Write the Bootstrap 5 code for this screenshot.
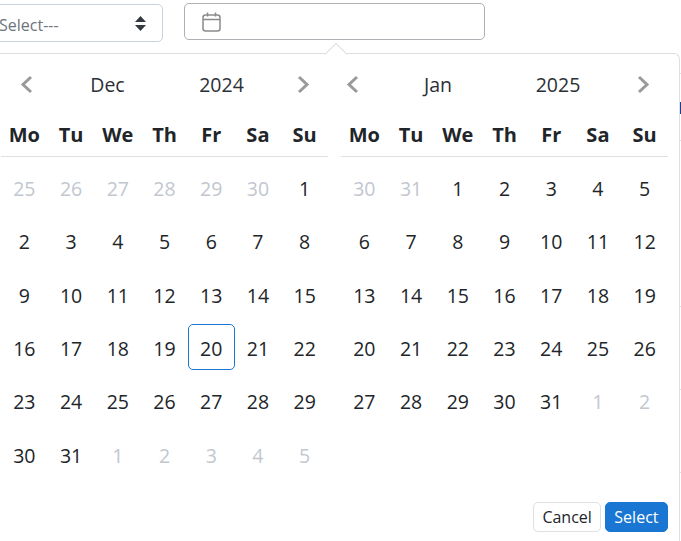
<!DOCTYPE html>
<html lang="en">
<head>
<meta charset="utf-8">
<title>Date range picker</title>
<link href="https://cdn.jsdelivr.net/npm/bootstrap@5.3.0/dist/css/bootstrap.min.css" rel="stylesheet">
<style>
html,body{height:541px;overflow:hidden;background:#fff}
body{font-family:"Open Sans","Noto Sans","Liberation Sans",sans-serif;color:#212529;position:relative}
.toprow{gap:21px;margin-left:-13px;padding-top:3px;align-items:flex-start}
.kind-select{width:176px;height:38px;margin-top:1px;font-size:16px;color:#6c757d;padding:4px 30px 0 11px;border-color:#c9d3da;border-radius:5px;
 background-image:url("data:image/svg+xml,%3Csvg xmlns='http://www.w3.org/2000/svg' viewBox='0 0 11 15'%3E%3Cpath fill='%23343a40' d='M5.5 0 11 6H0zM5.5 15 0 9h11z'/%3E%3C/svg%3E");
 background-size:11px 15px;background-position:right 16px center}
.date-box{width:301px;height:37px;border:1px solid #aeaeb4;border-radius:5px;padding-left:17px}
.date-box svg{width:19px;height:20px;display:block}
.picker{position:absolute;left:-12px;top:53px;width:692px;height:488px;background:#fff;border:1px solid #dcdfe2;border-bottom:0;border-radius:6px 6px 0 0;padding:0 10px 0 12px;z-index:2}
.picker::before{content:"";position:absolute;left:339px;top:-8px;width:16px;height:16px;background:#fff;border-left:1px solid #dcdfe2;border-top:1px solid #dcdfe2;transform:rotate(45deg)}
.cals{gap:13px;position:relative}
.cal{width:327px}
.navline{height:60px;padding-top:1px;font-size:19.500px;color:#2b3036}
.navline svg{width:13px;height:19px;display:block;flex:none}
.cal-a .navline{padding-left:19px;padding-right:18px}
.cal-b .navline{padding-left:5px;padding-right:18px}
.cal-a .m{width:149px}.cal-a .y{width:79px}
.cal-b .m{width:158px}.cal-b .y{width:82px}
.dow,.days{display:grid;grid-template-columns:repeat(7,1fr);text-align:center}
.dow{height:43px;font-weight:700;font-size:20px;line-height:41px;border-bottom:1px solid #dee0e3;color:#212529}
.days{margin-top:7px;grid-auto-rows:46px;row-gap:7.33px;font-size:19.500px}
.days span{border:1px solid transparent;border-radius:5px;line-height:48px;height:46px}
.days .off{color:#c2c7cf}
.days .today{border-color:#1976d2}
.acts{position:absolute;right:11px;top:448px;gap:4px}
.acts .btn{font-size:16px;height:30px;line-height:28px;border-radius:5px}
.btn-cancel{border:1px solid #dee0e3;background:#fff;color:#212529;padding:0 8px}
.btn-select{background:#1976d2;border:1px solid #1976d2;color:#fff;padding:0 8.500px}
.under{position:absolute;left:680px;top:0;width:1px;height:541px;background:#fff}
.under i{display:block;background:#dee2e6;height:1px}
.under .t1{margin-top:73px}.under .t2{margin-top:28px;height:12px;background:#1a3f8f}.under .t3{margin-top:26px}
.under .t4{margin-top:165px}.under .t5{margin-top:82px}.under .t6{margin-top:82px}
</style>
</head>
<body>
<div class="under"><i class="t1"></i><i class="t2"></i><i class="t3"></i><i class="t4"></i><i class="t5"></i><i class="t6"></i></div>
<div class="d-flex toprow">
  <select class="form-select kind-select"><option>Select---</option></select>
  <div class="date-box d-flex align-items-center">
    <svg viewBox="0 0 19 20" fill="none" stroke="#8a8a8a" stroke-width="1.5"><rect x="1" y="3" width="17" height="16" rx="2.5"/><path d="M1 7.500h17M5.500 0.500v4M13.500 0.500v4"/></svg>
  </div>
</div>
<div class="picker">
  <div class="d-flex cals">
    <div class="cal cal-a">
      <div class="navline d-flex align-items-center">
        <svg viewBox="0 0 13 19" fill="none" stroke="#9a9a9a" stroke-width="3"><path d="M11 2 3 9.500 11 17"/></svg>
        <span class="m text-center">Dec</span><span class="y text-center">2024</span>
        <svg class="ms-auto" viewBox="0 0 13 19" fill="none" stroke="#9a9a9a" stroke-width="3"><path d="M2 2l8 7.500L2 17"/></svg>
      </div>
      <div class="dow"><span>Mo</span><span>Tu</span><span>We</span><span>Th</span><span>Fr</span><span>Sa</span><span>Su</span></div>
      <div class="days">
        <span class="off">25</span><span class="off">26</span><span class="off">27</span><span class="off">28</span><span class="off">29</span><span class="off">30</span><span>1</span>
        <span>2</span><span>3</span><span>4</span><span>5</span><span>6</span><span>7</span><span>8</span>
        <span>9</span><span>10</span><span>11</span><span>12</span><span>13</span><span>14</span><span>15</span>
        <span>16</span><span>17</span><span>18</span><span>19</span><span class="today">20</span><span>21</span><span>22</span>
        <span>23</span><span>24</span><span>25</span><span>26</span><span>27</span><span>28</span><span>29</span>
        <span>30</span><span>31</span><span class="off">1</span><span class="off">2</span><span class="off">3</span><span class="off">4</span><span class="off">5</span>
      </div>
    </div>
    <div class="cal cal-b">
      <div class="navline d-flex align-items-center">
        <svg viewBox="0 0 13 19" fill="none" stroke="#9a9a9a" stroke-width="3"><path d="M11 2 3 9.500 11 17"/></svg>
        <span class="m text-center">Jan</span><span class="y text-center">2025</span>
        <svg class="ms-auto" viewBox="0 0 13 19" fill="none" stroke="#9a9a9a" stroke-width="3"><path d="M2 2l8 7.500L2 17"/></svg>
      </div>
      <div class="dow"><span>Mo</span><span>Tu</span><span>We</span><span>Th</span><span>Fr</span><span>Sa</span><span>Su</span></div>
      <div class="days">
        <span class="off">30</span><span class="off">31</span><span>1</span><span>2</span><span>3</span><span>4</span><span>5</span>
        <span>6</span><span>7</span><span>8</span><span>9</span><span>10</span><span>11</span><span>12</span>
        <span>13</span><span>14</span><span>15</span><span>16</span><span>17</span><span>18</span><span>19</span>
        <span>20</span><span>21</span><span>22</span><span>23</span><span>24</span><span>25</span><span>26</span>
        <span>27</span><span>28</span><span>29</span><span>30</span><span>31</span><span class="off">1</span><span class="off">2</span>
      </div>
    </div>
  </div>
  <div class="acts d-flex">
    <button type="button" class="btn btn-cancel">Cancel</button>
    <button type="button" class="btn btn-select">Select</button>
  </div>
</div>
<script src="https://cdn.jsdelivr.net/npm/bootstrap@5.3.0/dist/js/bootstrap.bundle.min.js"></script>
</body>
</html>
